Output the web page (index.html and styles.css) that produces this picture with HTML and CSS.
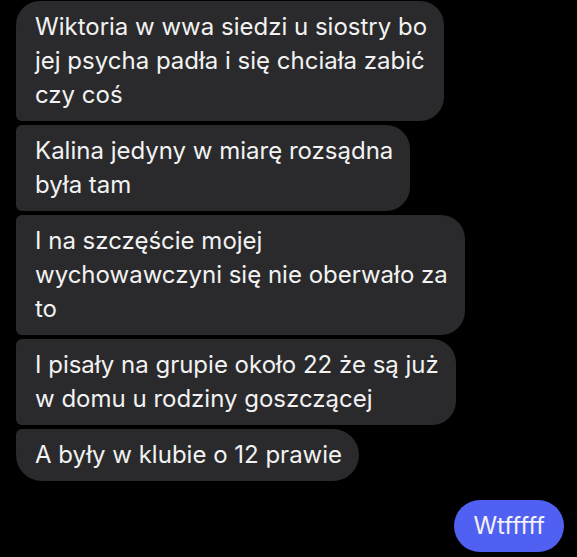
FILE: index.html
```html
<!DOCTYPE html>
<html lang="pl">
<head>
<meta charset="utf-8">
<link rel="stylesheet" href="styles.css">
</head>
<body>
<div class="chat">
  <div class="group">
    <div class="bubble in first">Wiktoria w wwa siedzi u siostry bo<br>jej psycha padła i się chciała zabić<br>czy coś</div>
    <div class="bubble in">Kalina jedyny w miarę rozsądna<br>była tam</div>
    <div class="bubble in">I na szczęście mojej<br>wychowawczyni się nie oberwało za<br>to</div>
    <div class="bubble in">I pisały na grupie około 22 że są już<br>w domu u rodziny goszczącej</div>
    <div class="bubble in last">A były w klubie o 12 prawie</div>
  </div>
  <div class="group out-group">
    <div class="bubble out">Wtfffff</div>
  </div>
</div>
</body>
</html>
```
FILE: styles.css
```css
html, body {
  margin: 0;
  padding: 0;
  background: #000;
}
body {
  width: 577px;
  height: 557px;
  overflow: hidden;
  font-family: Inter, "Noto Sans", "DejaVu Sans", sans-serif;
}
.chat {
  display: flex;
  flex-direction: column;
  gap: 19px;
  padding: 1px 13px 0 16px;
}
.group {
  display: flex;
  flex-direction: column;
  align-items: flex-start;
  gap: 4px;
}
.out-group {
  align-items: flex-end;
}
.bubble {
  font-size: 24px;
  line-height: 34px;
  color: #f2f2f2;
  white-space: nowrap;
  padding: 9px 17px 9px 19px;
  border-radius: 24px;
}
.in {
  background: #2a2a2c;
  border-radius: 6px 24px 24px 6px;
}
.in.first {
  border-top-left-radius: 24px;
}
.in.last {
  border-bottom-left-radius: 26px;
  border-radius: 6px 26px 26px 26px;
}
.out {
  background: #5060f2;
  border-radius: 26px;
  padding: 9px 19px 9px 19px;
}
```
